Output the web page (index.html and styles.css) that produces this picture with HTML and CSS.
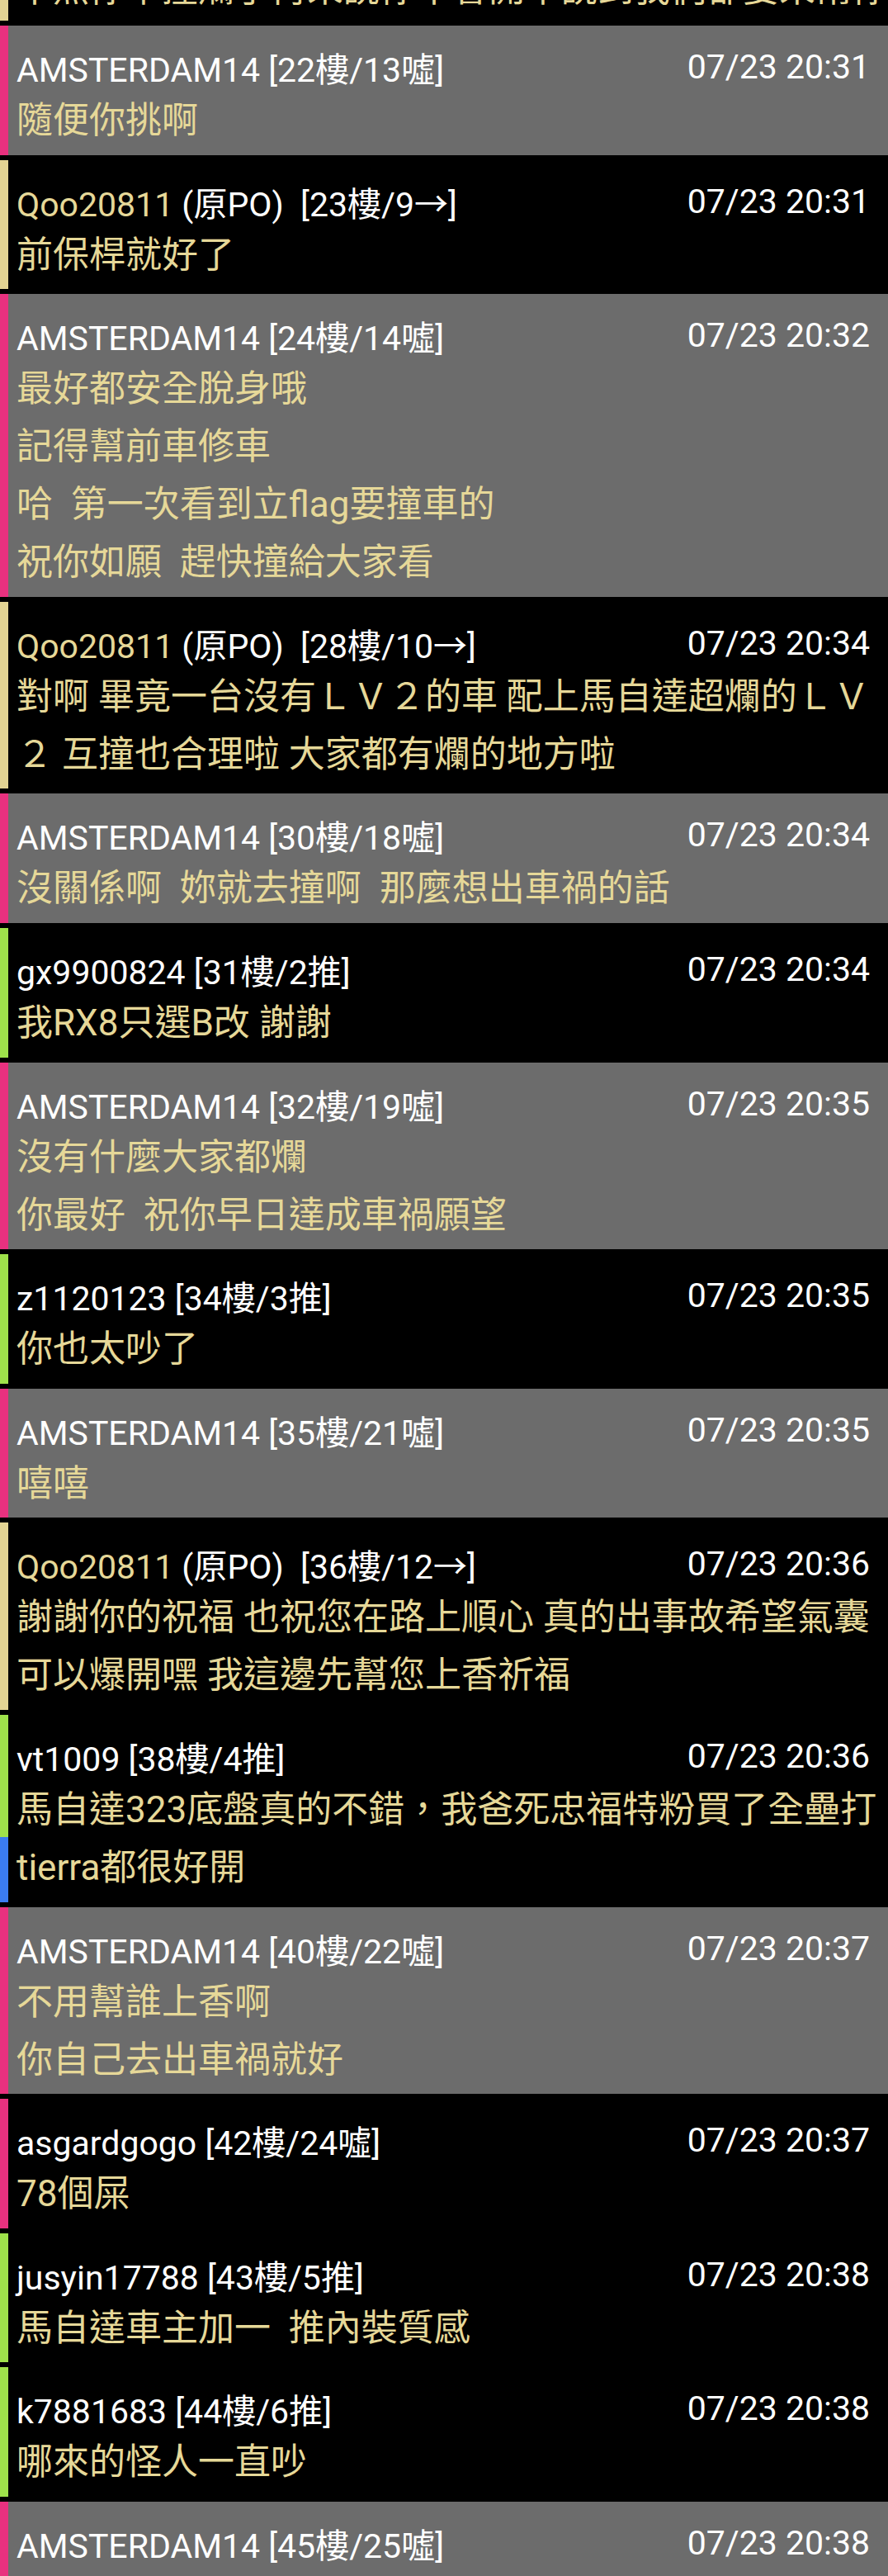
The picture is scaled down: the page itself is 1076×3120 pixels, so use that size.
FILE: index.html
```html
<!DOCTYPE html>
<html lang="zh-Hant">
<head>
<meta charset="utf-8">
<title>推文</title>
<link rel="stylesheet" href="styles.css">
</head>
<body>
<div class="list">
  <div class="c dark top">
    <div class="bar arrow"></div>
    <div class="main"><div class="body cut">不然你車撞爛了再來說你不會開車說到我們都要來幫你修車</div></div>
  </div>

  <div class="c gray">
    <div class="bar boo"></div>
    <div class="main">
      <div class="head"><span class="who">AMSTERDAM14 [22樓/13噓]</span><span class="time">07/23 20:31</span></div>
      <div class="body">隨便你挑啊</div>
    </div>
  </div>

  <div class="c dark">
    <div class="bar arrow"></div>
    <div class="main">
      <div class="head"><span class="who"><span class="op">Qoo20811</span> (原PO)  [23樓/9→]</span><span class="time">07/23 20:31</span></div>
      <div class="body">前保桿就好了</div>
    </div>
  </div>

  <div class="c gray">
    <div class="bar boo"></div>
    <div class="main">
      <div class="head"><span class="who">AMSTERDAM14 [24樓/14噓]</span><span class="time">07/23 20:32</span></div>
      <div class="body">最好都安全脫身哦
記得幫前車修車
哈  第一次看到立flag要撞車的
祝你如願  趕快撞給大家看</div>
    </div>
  </div>

  <div class="c dark">
    <div class="bar arrow"></div>
    <div class="main">
      <div class="head"><span class="who"><span class="op">Qoo20811</span> (原PO)  [28樓/10→]</span><span class="time">07/23 20:34</span></div>
      <div class="body">對啊 畢竟一台沒有ＬＶ２的車 配上馬自達超爛的ＬＶ２ 互撞也合理啦 大家都有爛的地方啦</div>
    </div>
  </div>

  <div class="c gray">
    <div class="bar boo"></div>
    <div class="main">
      <div class="head"><span class="who">AMSTERDAM14 [30樓/18噓]</span><span class="time">07/23 20:34</span></div>
      <div class="body">沒關係啊  妳就去撞啊  那麼想出車禍的話</div>
    </div>
  </div>

  <div class="c dark">
    <div class="bar push"></div>
    <div class="main">
      <div class="head"><span class="who">gx9900824 [31樓/2推]</span><span class="time">07/23 20:34</span></div>
      <div class="body">我RX8只選B改 謝謝</div>
    </div>
  </div>

  <div class="c gray">
    <div class="bar boo"></div>
    <div class="main">
      <div class="head"><span class="who">AMSTERDAM14 [32樓/19噓]</span><span class="time">07/23 20:35</span></div>
      <div class="body">沒有什麼大家都爛
你最好  祝你早日達成車禍願望</div>
    </div>
  </div>

  <div class="c dark">
    <div class="bar push"></div>
    <div class="main">
      <div class="head"><span class="who">z1120123 [34樓/3推]</span><span class="time">07/23 20:35</span></div>
      <div class="body">你也太吵了</div>
    </div>
  </div>

  <div class="c gray">
    <div class="bar boo"></div>
    <div class="main">
      <div class="head"><span class="who">AMSTERDAM14 [35樓/21噓]</span><span class="time">07/23 20:35</span></div>
      <div class="body">嘻嘻</div>
    </div>
  </div>

  <div class="c dark">
    <div class="bar arrow"></div>
    <div class="main">
      <div class="head"><span class="who"><span class="op">Qoo20811</span> (原PO)  [36樓/12→]</span><span class="time">07/23 20:36</span></div>
      <div class="body">謝謝你的祝福 也祝您在路上順心 真的出事故希望氣囊可以爆開嘿 我這邊先幫您上香祈福</div>
    </div>
  </div>

  <div class="c dark">
    <div class="bar split"></div>
    <div class="main">
      <div class="head"><span class="who">vt1009 [38樓/4推]</span><span class="time">07/23 20:36</span></div>
      <div class="body">馬自達323底盤真的不錯，我爸死忠福特粉買了全壘打tierra都很好開</div>
    </div>
  </div>

  <div class="c gray">
    <div class="bar boo"></div>
    <div class="main">
      <div class="head"><span class="who">AMSTERDAM14 [40樓/22噓]</span><span class="time">07/23 20:37</span></div>
      <div class="body">不用幫誰上香啊
你自己去出車禍就好</div>
    </div>
  </div>

  <div class="c dark">
    <div class="bar boo"></div>
    <div class="main">
      <div class="head"><span class="who">asgardgogo [42樓/24噓]</span><span class="time">07/23 20:37</span></div>
      <div class="body">78個屎</div>
    </div>
  </div>

  <div class="c dark">
    <div class="bar push"></div>
    <div class="main">
      <div class="head"><span class="who">jusyin17788 [43樓/5推]</span><span class="time">07/23 20:38</span></div>
      <div class="body">馬自達車主加一  推內裝質感</div>
    </div>
  </div>

  <div class="c dark">
    <div class="bar push"></div>
    <div class="main">
      <div class="head"><span class="who">k7881683 [44樓/6推]</span><span class="time">07/23 20:38</span></div>
      <div class="body">哪來的怪人一直吵</div>
    </div>
  </div>

  <div class="c gray">
    <div class="bar boo"></div>
    <div class="main">
      <div class="head"><span class="who">AMSTERDAM14 [45樓/25噓]</span><span class="time">07/23 20:38</span></div>
      <div class="body">還是你想去撞車</div>
    </div>
  </div>
</div>
</body>
</html>
```
FILE: styles.css
```css
html, body {
  margin: 0;
  padding: 0;
  background: #000;
}
body {
  width: 1076px;
  height: 3120px;
  overflow: hidden;
  font-family: Roboto, "Noto Sans CJK TC", "Noto Sans CJK SC", sans-serif;
}
.list {
  display: flex;
  flex-direction: column;
  gap: 6px;
}
.c {
  display: flex;
  align-items: stretch;
}
.c.gray { background: #6c6c6c; }
.c.dark { background: #000; }
.bar {
  width: 10px;
  flex: none;
}
.bar.boo { background: #e8317f; }
.bar.arrow { background: #e3d493; }
.bar.push { background: #9fe24b; }
.bar.split { background: linear-gradient(#9fe24b 0, #9fe24b 65%, #3b7cf0 65%, #3b7cf0 100%); }
.main {
  flex: 1;
  min-width: 0;
  padding: 20px 8px 6.6px 10px;
}
.head {
  display: flex;
  justify-content: space-between;
  align-items: center;
  height: 60px;
  padding-right: 14px;
  font-size: 41px;
  color: #fff;
  white-space: pre;
}
.op { color: #e6d898; }
.body {
  font-size: 44px;
  line-height: 70px;
  color: #e6d898;
  white-space: pre-wrap;
}
.c.top { height: 25px; overflow: hidden; }
.c.top .main { padding: 0 22px 0 10px; }
.body.cut { margin-top: -48px; white-space: nowrap; }
```
